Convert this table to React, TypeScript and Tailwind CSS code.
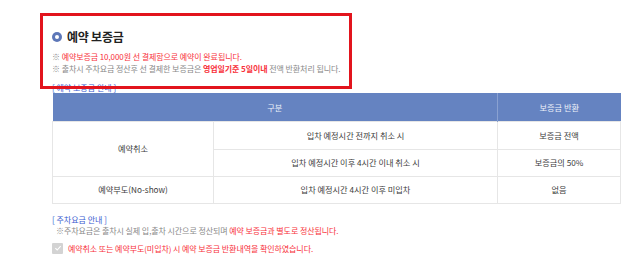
import React from 'react';

const font = { fontFamily: '"Noto Sans CJK KR", "Noto Sans", sans-serif' };

function CheckMark() {
  return (
    <svg viewBox="0 0 12 12" className="h-[8px] w-[8px]">
      <path d="M2 6.2 L4.8 9 L10 3.2" fill="none" stroke="#ffffff" strokeWidth="1.6" />
    </svg>
  );
}

export default function App() {
  return (
    <div className="relative w-[643px] h-[269px] overflow-hidden bg-white pl-[52px]" style={font}>
      {/* 강조 박스 */}
      <div className="absolute left-[40px] top-[13px] h-[76px] w-[312px] border-[3px] border-[#e2141d]" />

      <div className="flex items-center gap-[5px] pt-[29px] h-[45px]">
        <span className="flex h-[10px] w-[10px] items-center justify-center rounded-full bg-[#5d77b8]">
          <span className="h-[4px] w-[4px] rounded-full bg-white" />
        </span>
        <h2 className="text-[12px] font-bold leading-[16px] tracking-[-0.02em] text-[#222]">예약 보증금</h2>
      </div>

      <div className="mt-[6px] text-[8px] leading-[12px] tracking-[-0.01em] text-[#888]">
        <p>
          ※ <span className="text-[#f8303a]">예약보증금 10,000원 선 결제함으로 예약이 완료됩니다.</span>
        </p>
        <p>
          ※ 출차시 주차요금 정산후 선 결제한 보증금은{' '}
          <span className="font-bold text-[#f8303a]">영업일기준 5일이내</span> 전액 반환처리 됩니다.
        </p>
      </div>

      <p className="mt-[7px] text-[8px] leading-[11px] text-[#3a5bd0]">[ 예약 보증금 안내 ]</p>

      <table className="w-[568px] table-fixed border-collapse text-[8.2px] text-[#3d3d3d]">
        <colgroup>
          <col className="w-[161px]" />
          <col className="w-[284px]" />
          <col className="w-[123px]" />
        </colgroup>
        <thead>
          <tr className="h-[28px] bg-[#6583c1] text-[#eef2fa]">
            <th colSpan={2} className="border-r border-[#8aa1d1] font-normal">구분</th>
            <th className="font-normal">보증금 반환</th>
          </tr>
        </thead>
        <tbody>
          <tr className="h-[28px]">
            <td rowSpan={2} className="border border-[#e6e6e6] text-center">예약취소</td>
            <td className="border border-[#e6e6e6] text-center">입차 예정시간 전까지 취소 시</td>
            <td className="border border-[#e6e6e6] text-center">보증금 전액</td>
          </tr>
          <tr className="h-[27px]">
            <td className="border border-[#e6e6e6] text-center">입차 예정시간 이후 4시간 이내 취소 시</td>
            <td className="border border-[#e6e6e6] text-center">보증금의 50%</td>
          </tr>
          <tr className="h-[27px]">
            <td className="border border-[#e6e6e6] text-center">예약부도(No-show)</td>
            <td className="border border-[#e6e6e6] text-center">입차 예정시간 4시간 이후 미입차</td>
            <td className="border border-[#e6e6e6] text-center">없음</td>
          </tr>
        </tbody>
      </table>

      <p className="mt-[10px] text-[8px] leading-[11px] text-[#3a5bd0]">[ 주차요금 안내 ]</p>
      <p className="pl-[4px] text-[8px] leading-[11px] tracking-[-0.01em] text-[#888]">
        ※주차요금은 출차시 실제 입,출차 시간으로 정산되며{' '}
        <span className="text-[#f8303a]">예약 보증금과 별도로 정산됩니다.</span>
      </p>

      <label className="mt-[7px] flex items-center gap-[5px]">
        <span className="flex h-[11px] w-[11px] items-center justify-center rounded-[1px] bg-[#d3d3d3]">
          <CheckMark />
        </span>
        <span className="text-[8px] leading-[11px] tracking-[-0.01em] text-[#f8303a]">
          예약취소 또는 예약부도(미입차) 시 예약 보증금 반환내역을 확인하였습니다.
        </span>
      </label>
    </div>
  );
}
